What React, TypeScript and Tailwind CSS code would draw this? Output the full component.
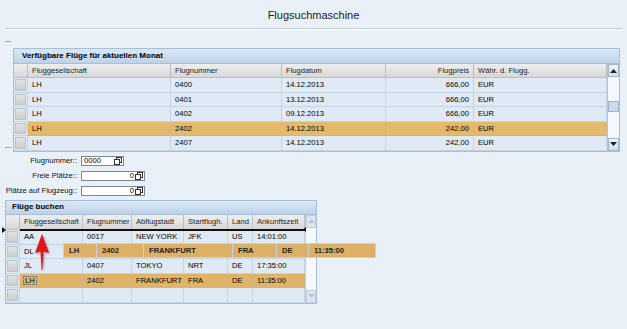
import React from 'react';

const font = { fontFamily: '"Liberation Sans", Arial, sans-serif' };

const TOP_COLS = ['w-[14px]', 'w-[143px]', 'w-[111px]', 'w-[104px]', 'w-[88px]', 'w-[133px]'];
const BOT_COLS = ['w-[14px]', 'w-[63px]', 'w-[49px]', 'w-[52px]', 'w-[44px]', 'w-[25px]', 'w-[52px]'];

const topRows = [
  ['LH', '0400', '14.12.2013', '666,00', 'EUR'],
  ['LH', '0401', '13.12.2013', '666,00', 'EUR'],
  ['LH', '0402', '09.12.2013', '666,00', 'EUR'],
  ['LH', '2402', '14.12.2013', '242,00', 'EUR'],
  ['LH', '2407', '14.12.2013', '242,00', 'EUR'],
];

const botRows = [
  ['AA', '0017', 'NEW YORK', 'JFK', 'US', '14:01:00'],
  ['DL', '', '', '', '', ''],
  ['JL', '0407', 'TOKYO', 'NRT', 'DE', '17:35:00'],
  ['LH', '2402', 'FRANKFURT', 'FRA', 'DE', '11:35:00'],
  ['', '', '', '', '', ''],
];

const Selector = () => (
  <div className="h-full p-px">
    <div className="h-full w-full border border-[#b8c3ce] bg-gradient-to-b from-[#e4e4e4] to-[#cbcbcb]" />
  </div>
);

const HelpIcon = () => (
  <svg width="8" height="8" viewBox="0 0 8 8" className="shrink-0">
    <rect x="2.5" y="0.5" width="5" height="5" fill="#fff" stroke="#333" />
    <rect x="0.5" y="2.5" width="5" height="5" fill="#fff" stroke="#333" />
  </svg>
);

const ScrollBtn = ({ up, dim }: { up?: boolean; dim?: boolean }) => (
  <div className={`flex items-center justify-center border ${dim ? 'h-[13px] border-[#c3d1df] bg-[#dde6f0]' : 'h-[13px] border-[#9fb6cd] bg-gradient-to-b from-[#eef3f8] to-[#d3e0ec]'}`}>
    <svg width="7" height="4" viewBox="0 0 7 4">
      {up ? <path d="M0 4 L3.5 0 L7 4 Z" fill={dim ? '#b8c4d0' : '#222'} /> : <path d="M0 0 L3.5 4 L7 0 Z" fill={dim ? '#b8c4d0' : '#222'} />}
    </svg>
  </div>
);

const Field = ({ label, value, right, width }: { label: string; value: string; right?: boolean; width: string }) => (
  <div className="flex h-[10px] items-center gap-[4px]">
    <div className="w-[77px] text-right text-[7.6px] leading-none text-[#111]">{label}</div>
    <div className={`flex h-[10px] ${width} items-center gap-[1px] border border-[#7d8a96] bg-white pl-[2px] pr-[1px]`}>
      <div className={`flex-1 text-[7.6px] leading-none text-black ${right ? 'text-right' : ''}`}>{value}</div>
      <HelpIcon />
    </div>
  </div>
);

export default function App() {
  return (
    <div className="flex h-[329px] w-[627px] flex-col overflow-hidden bg-[#e9f0f7] text-black" style={font}>
      {/* Title */}
      <div className="flex h-[28px] items-center justify-center pt-[3px] text-[11px] text-[#222]">Flugsuchmaschine</div>
      <div className="mx-[5px] h-[2px] border-t border-b border-t-[#c3cdd8] border-b-white" />

      {/* Available flights */}
      <div className="flex">
        <div className="flex w-[13px] flex-col pl-[5px]">
          <div className="mt-[11px] h-px w-[6px] bg-[#9aa8b6]" />
          <div className="mt-auto mb-[4px] h-px w-[6px] bg-[#9aa8b6]" />
        </div>
        <div className="mt-[18px] w-[607px] border border-[#a7bfd8]">
          <div className="flex h-[15px] items-center border-b border-[#a7bfd8] bg-gradient-to-b from-[#dbe8f5] to-[#bcd2e9] pl-[8px] text-[8px] font-bold">
            Verfügbare Flüge für aktuellen Monat
          </div>
          <div className="flex">
            <div className="flex flex-col">
              <div className="flex h-[14px] bg-gradient-to-b from-[#eeeeee] to-[#d6d6d6]">
                {TOP_COLS.map((w, i) => (
                  <div
                    key={i}
                    className={`${w} flex items-center border-r border-b border-[#b9bec4] px-[4px] text-[7.6px] text-[#222] ${i === 4 ? 'justify-end' : ''}`}
                  >
                    {['', 'Fluggesellschaft', 'Flugnummer', 'Flugdatum', 'Flugpreis', 'Währ. d. Flugg.'][i]}
                  </div>
                ))}
              </div>
              {topRows.map((r, ri) => (
                <div key={ri} className={`flex h-[14.6px] ${ri === 3 ? 'bg-[#e3b96b]' : 'bg-[#e0eaf5]'}`}>
                  <div className={`${TOP_COLS[0]} border-r border-b border-[#c5d4e3] bg-[#e0eaf5]`}>
                    <Selector />
                  </div>
                  {r.map((c, ci) => (
                    <div
                      key={ci}
                      className={`${TOP_COLS[ci + 1]} flex items-center border-r border-b px-[4px] text-[7.6px] ${ri === 3 ? 'border-[#cdb58a]' : 'border-[#c5d4e3]'} ${ci === 3 ? 'justify-end' : ''}`}
                    >
                      {c}
                    </div>
                  ))}
                </div>
              ))}
            </div>
            {/* scrollbar */}
            <div className="flex w-[12px] flex-col border-l border-[#b3c6da] bg-[#f6f9fc]">
              <ScrollBtn up />
              <div className="flex flex-1 flex-col">
                <div className="h-[24px]" />
                <div className="h-[11px] border border-[#9cb4cc] bg-[#c9daeb]" />
              </div>
              <ScrollBtn />
            </div>
          </div>
        </div>
      </div>

      {/* Form */}
      <div className="mt-[4px] flex flex-col gap-[5px]">
        <Field label="Flugnummer::" value="0000" width="w-[43px]" />
        <Field label="Freie Plätze::" value="0" right width="w-[64px]" />
        <Field label="Plätze auf Flugzeug::" value="0" right width="w-[64px]" />
      </div>

      {/* Book flights */}
      <div className="relative mt-[4px] ml-[5px] w-[312px] border border-[#a7bfd8]">
        <div className="flex h-[14px] items-center border-b border-[#a7bfd8] bg-gradient-to-b from-[#dbe8f5] to-[#bcd2e9] pl-[6px] text-[8px] font-bold">
          Flüge buchen
        </div>
        <div className="flex">
          <div className="flex flex-col">
            <div className="flex h-[15px] bg-gradient-to-b from-[#eeeeee] to-[#d6d6d6]">
              {BOT_COLS.map((w, i) => (
                <div key={i} className={`${w} flex items-center border-r border-b border-[#b9bec4] px-[4px] text-[7.6px] text-[#222] whitespace-nowrap`}>
                  {['', 'Fluggesellschaft', 'Flugnummer', 'Abflugstadt', 'Startflugh.', 'Land', 'Ankunftszeit'][i]}
                </div>
              ))}
            </div>
            {botRows.map((r, ri) => (
              <div key={ri} className={`flex h-[14.6px] ${ri === 3 ? 'bg-[#dfb468]' : 'bg-[#e0eaf5]'}`}>
                <div className={`${BOT_COLS[0]} border-r border-b border-[#c5d4e3] bg-[#e0eaf5]`}>
                  <Selector />
                </div>
                {r.map((c, ci) => (
                  <div
                    key={ci}
                    className={`${BOT_COLS[ci + 1]} flex items-center border-r border-b px-[4px] text-[7.6px] whitespace-nowrap ${ri === 3 ? 'border-[#cdb58a]' : 'border-[#c5d4e3]'}`}
                  >
                    {ri === 3 && ci === 0 ? <span className="-ml-px border border-dotted border-[#555] px-px leading-none">{c}</span> : c}
                  </div>
                ))}
              </div>
            ))}
          </div>
          <div className="flex w-[11px] flex-col border-l border-[#c0d0e0] bg-[#f6f9fc]">
            <ScrollBtn up dim />
            <div className="flex-1" />
            <ScrollBtn dim />
          </div>
        </div>

        {/* drop insertion marker */}
        <div className="absolute top-[28px] left-[14px] h-[2px] w-[286px] bg-[#111]" />
        <svg width="4" height="6" viewBox="0 0 4 6" className="absolute top-[26px] left-[-4px]">
          <path d="M0 0 L4 3 L0 6 Z" fill="#111" />
        </svg>
        <svg width="3" height="5" viewBox="0 0 3 5" className="absolute top-[26.5px] left-[297px]">
          <path d="M3 0 L0 2.5 L3 5 Z" fill="#111" />
        </svg>

        {/* dragged row */}
        <div className="absolute top-[42px] left-[57px] flex h-[15px] border border-[#c9d2dc] bg-[#dcb167] text-[7.6px] font-bold text-[#222]">
          {[
            ['w-[33px]', 'LH'],
            ['w-[47px]', '2402'],
            ['w-[89px]', 'FRANKFURT'],
            ['w-[44px]', 'FRA'],
            ['w-[32px]', 'DE'],
            ['w-[66px]', '11:35:00'],
          ].map(([w, t], i) => (
            <div key={i} className={`${w} flex items-center border-r border-[#c9d2dc] px-[5px] last:border-r-0`}>
              {t}
            </div>
          ))}
        </div>

        {/* red arrow */}
        <svg width="18" height="40" viewBox="0 0 18 40" className="absolute top-[32px] left-[27px]" style={{ filter: 'drop-shadow(1px 1px 1px rgba(0,0,0,0.35))' }}>
          <path d="M9 1 L16 20 L10.5 18.5 L9.4 37 L8.6 37 L7.5 18.5 L2 20 Z" fill="#e6131b" />
        </svg>
      </div>
    </div>
  );
}
